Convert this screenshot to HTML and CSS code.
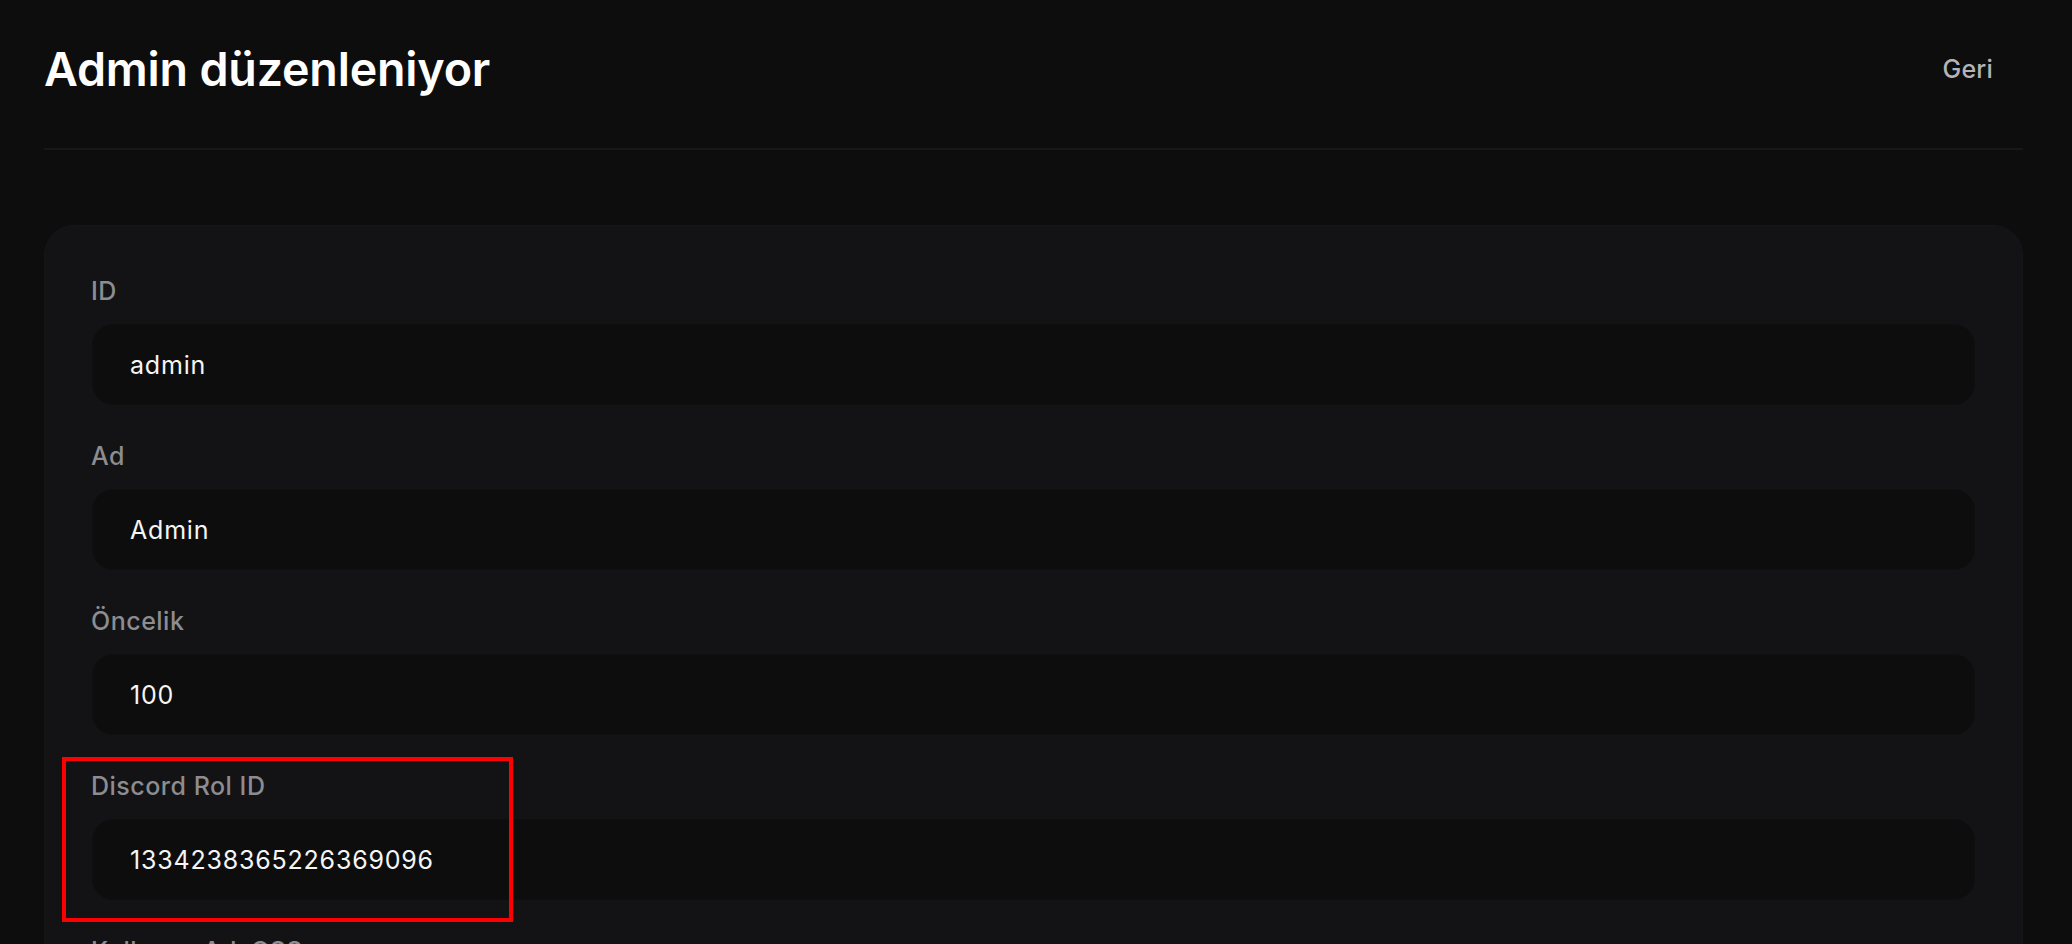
FILE: index.html
```html
<!DOCTYPE html>
<html lang="tr">
<head>
<meta charset="utf-8">
<title>Admin düzenleniyor</title>
<link rel="stylesheet" href="styles.css">
</head>
<body>
<div class="page">
  <header class="header">
    <h1 class="title">Admin düzenleniyor</h1>
    <a class="back" href="#">Geri</a>
  </header>
  <main class="card">
    <div class="field">
      <label class="label">ID</label>
      <div class="input">admin</div>
    </div>
    <div class="field">
      <label class="label">Ad</label>
      <div class="input">Admin</div>
    </div>
    <div class="field">
      <label class="label">Öncelik</label>
      <div class="input">100</div>
    </div>
    <div class="field">
      <label class="label">Discord Rol ID</label>
      <div class="input">1334238365226369096</div>
      <span class="highlight"></span>
    </div>
    <div class="field">
      <label class="label">Kullanıcı Adı CSS</label>
      <div class="input">&nbsp;</div>
    </div>
  </main>
</div>
</body>
</html>
```

FILE: styles.css
```css
* { box-sizing: border-box; }
html, body {
  margin: 0;
  padding: 0;
  background: #0d0d0d;
  overflow: hidden;
}
body {
  font-family: Inter, "Noto Sans", "Liberation Sans", sans-serif;
  color: #f4f4f5;
  height: 944px;
}
.page {
  padding: 0 49px 0 44px;
}
.header {
  display: flex;
  align-items: center;
  justify-content: space-between;
  padding: 42px 0 52px;
  border-bottom: 2px solid #18181a;
}
.title {
  margin: 0;
  font-size: 46.6px;
  line-height: 54px;
  font-weight: 600;
  color: #ffffff;
  letter-spacing: -0.2px;
}
.back {
  color: #b4b4b6;
  text-decoration: none;
  font-size: 25px;
  line-height: 36px;
  font-weight: 500;
  letter-spacing: 0.2px;
  margin-right: 30px;
}
.card {
  margin-top: 75px;
  background: #131315;
  border: 1px solid #161618;
  border-radius: 30px;
  padding: 47px 47px 40px;
}
.field {
  position: relative;
  display: flex;
  flex-direction: column;
  gap: 15px;
  margin-bottom: 33px;
}
.label {
  font-size: 25px;
  line-height: 36px;
  font-weight: 500;
  letter-spacing: 0.5px;
  color: #8c8c91;
  margin-left: -1px;
}
.input {
  height: 81px;
  display: flex;
  align-items: center;
  padding: 0 37px;
  background: #0d0d0d;
  border: 1px solid #0f0f10;
  border-radius: 21px;
  font-size: 25px;
  line-height: 36px;
  letter-spacing: 0.8px;
  color: #f5f5f5;
}
.highlight {
  position: absolute;
  top: -11px;
  left: -30px;
  width: 451px;
  height: 165px;
  border: 4px solid #ff0000;
  pointer-events: none;
}
```
